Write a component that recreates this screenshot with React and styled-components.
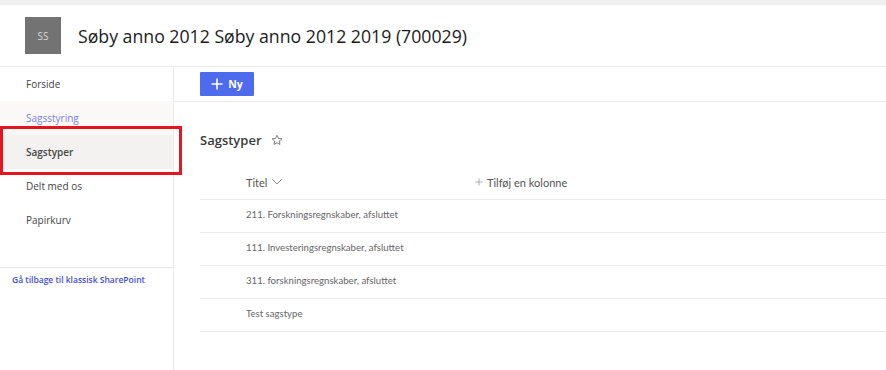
import React from "react";
import styled, { createGlobalStyle } from "styled-components";

const GlobalStyle = createGlobalStyle`
  body {
    margin: 0;
    background: #ffffff;
    font-family: "Open Sans", "Noto Sans", sans-serif;
    color: #323130;
  }
`;

const Page = styled.div`
  width: 886px;
  height: 370px;
  display: flex;
  flex-direction: column;
  overflow: hidden;
`;

const TopStrip = styled.div`
  height: 5px;
  background: #f0f0f0;
`;

const Header = styled.header`
  height: 61px;
  display: flex;
  align-items: center;
  gap: 17px;
  padding-left: 25px;
  border-bottom: 1px solid #ebebeb;
`;

const Avatar = styled.div`
  width: 36px;
  height: 37px;
  background: #737373;
  color: #d6d6d6;
  font-size: 10px;
  display: flex;
  align-items: center;
  justify-content: center;
`;

const SiteTitle = styled.h1`
  margin: 0;
  font-size: 17.7px;
  font-weight: 400;
  color: #1b1b1b;
`;

const Body = styled.div`
  flex: 1;
  display: flex;
`;

const Nav = styled.nav`
  width: 173px;
  border-right: 1px solid #ebebeb;
  display: flex;
  flex-direction: column;
`;

const NavItem = styled.div`
  position: relative;
  height: 34px;
  display: flex;
  align-items: center;
  padding-left: 26px;
  font-size: 10px;
  color: ${(p) => (p.$link ? "#7a80ee" : "#444444")};
  font-weight: ${(p) => (p.$active ? 600 : 400)};
  background: ${(p) => (p.$active ? "#f3f2f1" : p.$hover ? "#faf9f8" : "transparent")};
`;

const Highlight = styled.div`
  position: absolute;
  left: 0;
  top: -9px;
  width: 182px;
  height: 49px;
  box-sizing: border-box;
  border: 3px solid #e5141e;
`;

const NavFooter = styled.div`
  margin-top: 30px;
  border-top: 1px solid #e6e6e6;
  padding: 6px 0 0 12px;
  font-size: 8.5px;
  font-weight: 600;
  color: #3f4fd6;
`;

const Content = styled.main`
  flex: 1;
  display: flex;
  flex-direction: column;
`;

const CommandBar = styled.div`
  height: 34px;
  display: flex;
  align-items: center;
  padding-left: 26px;
  border-bottom: 1px solid #ebebeb;
`;

const NewButton = styled.button`
  width: 54px;
  height: 24px;
  border: none;
  border-radius: 1px;
  background: #4f6bed;
  color: #ffffff;
  font-family: inherit;
  font-size: 10.5px;
  font-weight: 700;
  display: flex;
  align-items: center;
  justify-content: center;
  gap: 5px;
  padding: 0;
`;

const ListArea = styled.section`
  padding-left: 26px;
`;

const ListTitle = styled.h2`
  margin: 0;
  height: 76px;
  display: flex;
  align-items: center;
  gap: 9px;
  font-size: 13px;
  font-weight: 600;
  color: #3b3a39;
`;

const HeaderRow = styled.div`
  height: 34px;
  display: flex;
  align-items: center;
  padding-left: 46px;
  border-bottom: 1px solid #ebebeb;
  font-family: Lato, "Open Sans", sans-serif;
  font-size: 11px;
  color: #555555;
  margin-top: -13px;
`;

const ColTitle = styled.div`
  width: 229px;
  display: flex;
  align-items: center;
  gap: 5px;
`;

const AddColumn = styled.div`
  display: flex;
  align-items: center;
  gap: 4px;
`;

const Row = styled.div`
  height: 33px;
  box-sizing: border-box;
  display: flex;
  align-items: center;
  padding: 0 0 4px 46px;
  border-bottom: 1px solid #ebebeb;
  font-family: Lato, "Open Sans", sans-serif;
  font-size: 9.6px;
  color: #666666;
`;

const Plus = ({ size = 12, stroke = "#fff", width = 1.6 }) => (
  <svg width={size} height={size} viewBox="0 0 12 12">
    <path d="M6 0.5v11M0.5 6h11" stroke={stroke} strokeWidth={width} fill="none" />
  </svg>
);

const Star = () => (
  <svg width="12" height="12" viewBox="0 0 24 24">
    <path
      d="M12 2.5l2.9 6.3 6.9.7-5.2 4.6 1.5 6.8L12 17.4l-6.1 3.5 1.5-6.8-5.2-4.6 6.9-.7z"
      fill="none"
      stroke="#666"
      strokeWidth="1.6"
      strokeLinejoin="round"
    />
  </svg>
);

const Chevron = () => (
  <svg width="10" height="6" viewBox="0 0 10 6">
    <path d="M0.5 0.5L5 5l4.5-4.5" fill="none" stroke="#888" strokeWidth="1" />
  </svg>
);

const navItems = [
  { label: "Forside" },
  { label: "Sagsstyring", link: true, hover: true },
  { label: "Sagstyper", active: true },
  { label: "Delt med os" },
  { label: "Papirkurv" },
];

const rows = [
  "211. Forskningsregnskaber, afsluttet",
  "111. Investeringsregnskaber, afsluttet",
  "311. forskningsregnskaber, afsluttet",
  "Test sagstype",
];

export default function App() {
  return (
    <Page>
      <GlobalStyle />
      <TopStrip />
      <Header>
        <Avatar>SS</Avatar>
        <SiteTitle>Søby anno 2012 Søby anno 2012 2019 (700029)</SiteTitle>
      </Header>
      <Body>
        <Nav>
          {navItems.map((item) => (
            <NavItem
              key={item.label}
              $link={item.link}
              $hover={item.hover}
              $active={item.active}
            >
              {item.label}
              {item.active && <Highlight />}
            </NavItem>
          ))}
          <NavFooter>Gå tilbage til klassisk SharePoint</NavFooter>
        </Nav>
        <Content>
          <CommandBar>
            <NewButton>
              <Plus />
              Ny
            </NewButton>
          </CommandBar>
          <ListArea>
            <ListTitle>
              Sagstyper
              <Star />
            </ListTitle>
            <HeaderRow>
              <ColTitle>
                Titel
                <Chevron />
              </ColTitle>
              <AddColumn>
                <Plus size={8} stroke="#888" width={1} />
                Tilføj en kolonne
              </AddColumn>
            </HeaderRow>
            {rows.map((r) => (
              <Row key={r}>{r}</Row>
            ))}
          </ListArea>
        </Content>
      </Body>
    </Page>
  );
}
